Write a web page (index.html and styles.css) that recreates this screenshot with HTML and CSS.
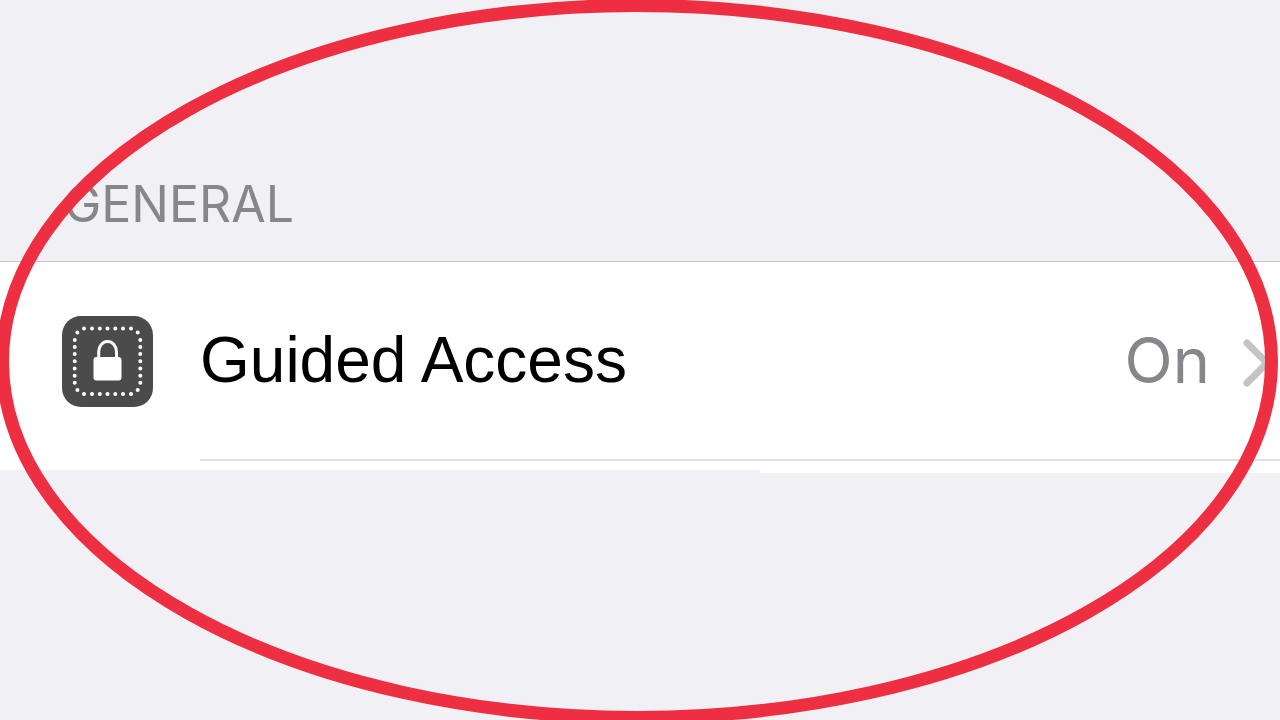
FILE: index.html
```
<!DOCTYPE html>
<html lang="en">
<head>
<meta charset="utf-8">
<meta name="viewport" content="width=device-width, initial-scale=1">
<title>General</title>
<link rel="stylesheet" href="styles.css">
</head>
<body>
<main class="settings">
  <h1 class="section-title">GENERAL</h1>
  <section class="group">
    <a class="row" href="#">
      <svg class="row-icon" viewBox="0 0 91 91" aria-hidden="true">
        <rect width="91" height="91" rx="19" fill="#4b4b4b"/>
        <g class="dots">
          <path d="M22 12.500h.01M30 12.500h.01M37.800 12.500h.01M45.500 12.500h.01M53.300 12.500h.01M61 12.500h.01M69 12.500h.01"/>
          <path d="M22 78h.01M30 78h.01M37.800 78h.01M45.500 78h.01M53.300 78h.01M61 78h.01M69 78h.01"/>
          <path d="M12.700 24h.01M12.700 31h.01M12.700 38h.01M12.700 45.300h.01M12.700 52.500h.01M12.700 59.700h.01M12.700 66.700h.01"/>
          <path d="M78.300 24h.01M78.300 31h.01M78.300 38h.01M78.300 45.300h.01M78.300 52.500h.01M78.300 59.700h.01M78.300 66.700h.01"/>
          <path d="M15.400 16.500h.01M75.700 16.500h.01M15.400 74h.01M75.700 74h.01"/>
        </g>
        <rect x="31.500" y="41" width="28" height="23.500" rx="3" fill="#fff"/>
        <path d="M36.700 42V35.500a8.900 10 0 0 1 17.800 0V42" fill="none" stroke="#fff" stroke-width="3"/>
      </svg>
      <span class="row-body">
        <span class="row-label">Guided Access</span>
        <span class="row-value">On</span>
        <svg class="chevron" viewBox="0 0 28 48" aria-hidden="true"><path d="M4 6L24 26L4 46"/></svg>
      </span>
    </a>
    <div class="edge"><span></span><span></span></div>
  </section>
</main>
<svg class="marker" viewBox="0 0 1280 720" preserveAspectRatio="none" aria-hidden="true">
  <ellipse cx="637" cy="361.500" rx="634.500" ry="356"/>
</svg>
</body>
</html>
```
FILE: styles.css
```
body {
  margin: 0;
  min-height: 100vh;
  position: relative;
  overflow: hidden;
  background: #f1f0f5;
  font-family: Inter, "Liberation Sans", sans-serif;
}

.settings {
  padding-top: 172px;
}

.section-title {
  margin: 0;
  padding: 0 64px 25px;
  font-size: 50px;
  line-height: 64px;
  font-weight: 400;
  color: #86868b;
}

.group {
  border-top: 1px solid #c8c8cc;
}

.row {
  display: flex;
  align-items: stretch;
  padding-left: 62px;
  gap: 47px;
  background: #fff;
  color: #000;
  text-decoration: none;
}

.row-icon {
  flex: none;
  align-self: center;
  width: 91px;
  height: 91px;
}

.dots {
  fill: none;
  stroke: #fff;
  stroke-width: 4;
  stroke-linecap: round;
}

.row-body {
  flex: 1;
  display: flex;
  align-items: center;
  border-bottom: 2px solid #dedede;
  padding-right: 9px;
  font-size: 63px;
  line-height: 197px;
}

.row-label {
  flex: 1;
  font-family: "Liberation Sans", Arial, sans-serif;
  font-size: 64px;
}

.row-value {
  color: #86868b;
}

.chevron {
  flex: none;
  width: 28px;
  height: 48px;
  margin-left: 33px;
  overflow: visible;
  fill: none;
  stroke: #c4c4c6;
  stroke-width: 7;
  stroke-linecap: round;
  stroke-linejoin: round;
}

.edge {
  display: grid;
  grid-template-columns: 19fr 13fr;
  align-items: start;
}

.edge span {
  height: 9px;
  background: #fff;
}

.edge span:last-child {
  height: 12px;
}

.marker {
  position: absolute;
  inset: 0;
  width: 100%;
  height: 100%;
  fill: none;
  stroke: #ee2f42;
  stroke-width: 13;
  pointer-events: none;
}
```
